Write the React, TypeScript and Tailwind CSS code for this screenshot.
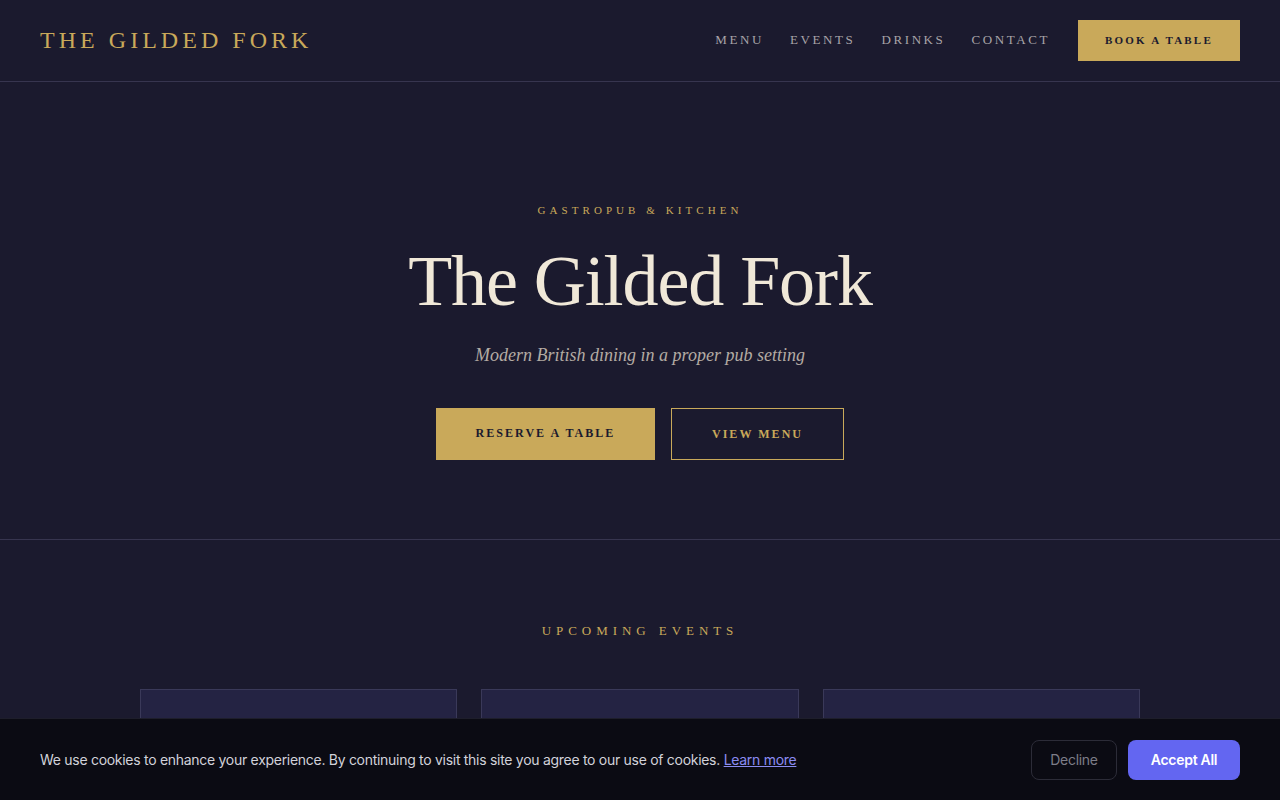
import React from "react";

const serif = { fontFamily: '"Liberation Serif", "Times New Roman", serif' };

export default function App() {
  return (
    <div className="min-h-screen bg-[#1b1a2e] text-[#f0e8d8]" style={serif}>
      <header className="h-[82px] border-b border-[#37354f] px-10 flex items-center justify-between">
        <div className="text-[24px] leading-none tracking-[0.168em] text-[#c9a95a] -mt-[2px]">THE GILDED FORK</div>
        <nav className="flex items-center">
          <div className="flex items-center gap-[26px] text-[13px] tracking-[0.2em] text-[#a8a4a8] -mt-px">
            <a>MENU</a>
            <a>EVENTS</a>
            <a>DRINKS</a>
            <a>CONTACT</a>
          </div>
          <button className="ml-[28px] w-[162px] h-[41px] bg-[#c9a95a] text-[#1b1a2e] text-[11px] font-bold tracking-[0.2em]">
            BOOK A TABLE
          </button>
        </nav>
      </header>

      <section className="border-b border-[#37354f] pt-[120px] pb-[79px] flex flex-col items-center text-center">
        <div className="text-[11px] leading-[16px] tracking-[0.37em] text-[#c9a95a]">GASTROPUB &amp; KITCHEN</div>
        <h1 className="mt-6 text-[72px] leading-[1.1] tracking-[-0.015em] text-[#f0e8d8]">The Gilded Fork</h1>
        <p className="mt-5 text-[18px] leading-[28px] italic text-[#b3aba3]">Modern British dining in a proper pub setting</p>
        <div className="mt-[39px] flex gap-4">
          <button className="w-[219px] h-[52px] bg-[#c9a95a] text-[#1b1a2e] text-[12px] font-bold tracking-[0.17em] pb-[2px]">
            RESERVE A TABLE
          </button>
          <button className="w-[173px] h-[52px] border border-[#c9a95a] text-[#c9a95a] text-[12px] font-bold tracking-[0.17em]">
            VIEW MENU
          </button>
        </div>
      </section>

      <section className="pt-[82px] pb-20 flex flex-col items-center">
        <h2 className="text-[13px] leading-[18px] tracking-[0.38em] text-[#c9a95a]">UPCOMING EVENTS</h2>
        <div className="mt-[49px] w-[1000px] grid grid-cols-3 gap-6">
          {[0, 1, 2].map((i) => (
            <div key={i} className="h-[240px] bg-[#242343] border border-[#3a3959]" />
          ))}
        </div>
      </section>

      <div
        className="fixed bottom-0 left-0 right-0 h-[82px] bg-[#0b0b13] border-t border-[#1e1e2b] px-10 flex items-center justify-between tracking-[-0.018em]"
        style={{ fontFamily: 'Inter, "Liberation Sans", sans-serif' }}
      >
        <p className="text-[14px] text-[#d2d2da]">
          We use cookies to enhance your experience. By continuing to visit this site you agree to our use of cookies.{" "}
          <a className="text-[#8b8cf2] underline">Learn more</a>
        </p>
        <div className="flex items-center gap-[11px]">
          <button className="w-[86px] h-[40px] rounded-lg border border-[#2c2c38] text-[14px] text-[#7d7d88]">Decline</button>
          <button className="w-[112px] h-[40px] rounded-lg bg-[#6366f1] text-[14px] font-semibold text-white">Accept All</button>
        </div>
      </div>
    </div>
  );
}
